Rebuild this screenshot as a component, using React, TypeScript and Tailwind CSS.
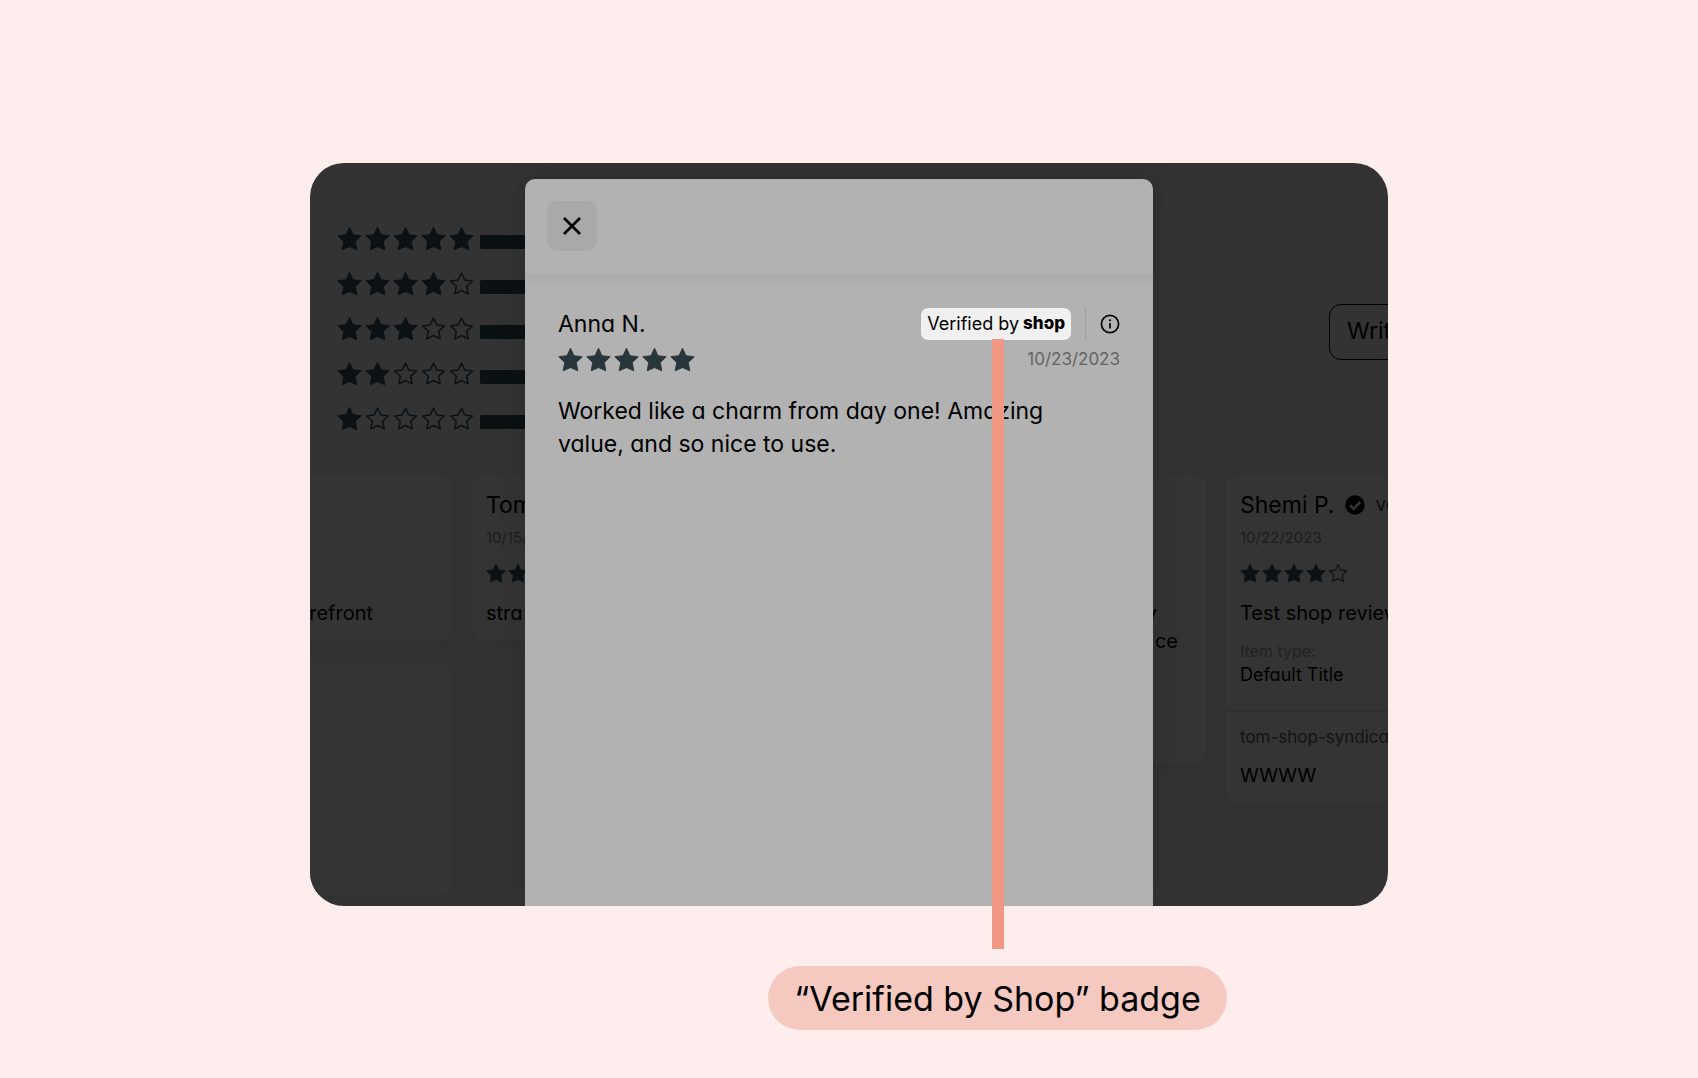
import React from "react";

const STAR =
  "M12.5 1.2 L16 8.7 L24.2 9.7 L18.3 15.5 L19.8 23.8 L12.5 20.6 L5.2 23.8 L6.7 15.5 L0.8 9.7 L9 8.7 Z";
const STAR_OUTLINE =
  "M12.5 2 L15.7 8.9 L23.4 9.9 L17.7 15.2 L19.2 22.9 L12.5 19.5 L5.8 22.9 L7.3 15.2 L1.6 9.9 L9.3 8.9 Z";

function Star({ filled, className }: { filled: boolean; className: string }) {
  return (
    <svg viewBox="0 0 25 25" className={className} aria-hidden="true">
      {filled ? (
        <path d={STAR} fill="currentColor" stroke="currentColor" strokeWidth="0.9" strokeLinejoin="round" />
      ) : (
        <path d={STAR_OUTLINE} fill="none" stroke="currentColor" strokeWidth="1.5" strokeLinejoin="round" />
      )}
    </svg>
  );
}

function Stars({ value, small = false }: { value: number; small?: boolean }) {
  return (
    <div
      role="img"
      aria-label={`${value} out of 5 stars`}
      className={small ? "flex gap-[2px]" : "flex gap-[3px]"}
    >
      {[1, 2, 3, 4, 5].map((n) => (
        <Star key={n} filled={n <= value} className={small ? "size-5" : "size-[25px]"} />
      ))}
    </div>
  );
}

function Card({ children, className = "" }: { children?: React.ReactNode; className?: string }) {
  return (
    <article className={`rounded-[10px] bg-[#343434] shadow-[0_4px_12px_rgba(0,0,0,0.06)] ${className}`}>
      {children}
    </article>
  );
}

function Storefront() {
  return (
    <div className="pt-[53px] pb-[11px] whitespace-nowrap text-black">
      <div className="flex items-center justify-between pl-[27px]">
        <ul className="text-[#0b1115]">
          {[5, 4, 3, 2, 1].map((n) => (
            <li key={n} className="flex h-[45px] items-center gap-[6px]">
              <Stars value={n} />
              <span className="mt-[6px] h-[14px] w-[100px] rounded-[2px] bg-[#0b1013]" />
            </li>
          ))}
        </ul>
        <button
          type="button"
          className="mt-[6px] -mr-[121px] h-14 w-[180px] shrink-0 rounded-xl border border-black px-[17px] text-left text-[23px]"
        >
          Write a review
        </button>
      </div>

      <div className="mt-[34px] -ml-[215px] flex items-start gap-5">
        <div className="flex w-[357px] shrink-0 flex-col gap-5">
          <Card className="h-[166px] pt-[124px] pr-[79px] text-right text-[20px] leading-[28px]">storefront</Card>
          <Card className="h-[234px]" />
        </div>

        <Card className="h-[166px] w-[357px] shrink-0 px-[14px] pt-[14px]">
          <h3 className="text-[23px] leading-[32px]">Tom</h3>
          <p className="mt-1 text-[15px] leading-[26px] text-[#1d1d1d]">10/15/2023</p>
          <div className="mt-3 text-[#0b1115]">
            <Stars value={5} small />
          </div>
          <p className="mt-4 text-[20px] leading-[28px]">stra</p>
        </Card>

        <Card className="h-[288px] w-[357px] shrink-0 pt-[124px] pr-[28px] text-right text-[20px] leading-[28px]">
          <p className="pr-[21px]">y</p>
          <p>ce</p>
        </Card>

        <Card className="w-[357px] shrink-0 pt-[14px]">
          <div className="px-[14px]">
            <h3 className="flex items-center text-[23px] leading-[32px]">
              Shemi P.
              <svg viewBox="0 0 20 20" className="mr-[11px] ml-[10px] size-5" aria-hidden="true">
                <circle cx="10" cy="10" r="9.7" fill="#000" />
                <path d="M5 10.2 L8.6 13.8 L15.2 7" fill="none" stroke="#353535" strokeWidth="2.6" />
              </svg>
              <span className="text-[19px] text-[#0c0c0c]">verified</span>
            </h3>
            <p className="mt-1 text-[15px] leading-[26px] text-[#1d1d1d]">10/22/2023</p>
            <div className="mt-3 text-[#0b1115]">
              <Stars value={4} small />
            </div>
            <p className="mt-4 text-[20px] leading-[28px]">Test shop review</p>
            <p className="mt-3 text-[16px] leading-6 text-[#222222]">Item type:</p>
            <p className="text-[18px] leading-6">Default Title</p>
          </div>
          <div className="mt-[23px] border-t-2 border-[#2f2f2f] px-[14px] pt-3 pb-[15px]">
            <p className="text-[17px] leading-[26px] text-[#131313]">tom-shop-syndication</p>
            <p className="mt-3 text-[19px] leading-[28px]">WWWW</p>
          </div>
        </Card>
      </div>
    </div>
  );
}

function ShopWordmark() {
  return (
    <b className="font-extrabold">
      sh
      <span className="relative">
        o
        <span className="absolute top-1/2 left-0 h-px w-1 bg-[#f0f0f0]" />
      </span>
      p
    </b>
  );
}

function ReviewDialog() {
  return (
    <section
      role="dialog"
      aria-label="Review by Anna N."
      className="absolute top-[16px] right-[235px] bottom-0 left-[215px] rounded-t-[10px] bg-[#b2b2b2] text-black shadow-[0_0_30px_rgba(0,0,0,0.12)]"
    >
      <header className="px-[22px] pt-[22px] pb-[23px] shadow-[0_4px_12px_rgba(0,0,0,0.06)]">
        <button
          type="button"
          aria-label="Close"
          className="flex size-[50px] items-center justify-center rounded-[10px] bg-[#a9a9a9]"
        >
          <svg viewBox="0 0 18 18" className="size-[18px]" aria-hidden="true">
            <path d="M1 1 L17 17 M17 1 L1 17" stroke="#000" strokeWidth="2.7" />
          </svg>
        </button>
      </header>

      <div className="px-[33px] pt-[33px]">
        <div className="flex items-center justify-between">
          <h2 className="text-[23px] leading-8">Anna N.</h2>
          <div className="flex items-center">
            <span className="flex h-8 items-center gap-1 rounded-[7px] bg-[#f0f0f0] px-[6px] text-[18px]">
              Verified by
              <span className="text-[17px]">
                <ShopWordmark />
              </span>
            </span>
            <span className="ml-[14px] h-[33px] w-px bg-[#a0a0a0]" />
            <button type="button" aria-label="About this badge" className="ml-[14px]">
              <svg viewBox="0 0 20 20" className="size-5" aria-hidden="true">
                <circle cx="10" cy="10" r="8.6" fill="none" stroke="#0a0a0a" strokeWidth="1.8" />
                <path d="M10 9 V14.4" stroke="#0a0a0a" strokeWidth="1.8" />
                <circle cx="10" cy="6.3" r="1.1" fill="#0a0a0a" />
              </svg>
            </button>
          </div>
        </div>
        <div className="mt-1 flex items-center justify-between text-[#28363c]">
          <Stars value={5} />
          <time className="text-[17px] leading-[30px] text-[#646464]">10/23/2023</time>
        </div>
        <p className="mt-[21px] text-[23px] leading-[33px]">
          Worked like a charm from day one! Amazing
          <br />
          value, and so nice to use.
        </p>
      </div>
    </section>
  );
}

export default function App() {
  return (
    <main className="min-h-screen bg-[#fdeeed] pt-[163px] font-['Inter',sans-serif]">
      <div className="relative mx-auto max-w-[1078px]">
        <div className="relative overflow-hidden rounded-[34px] bg-[#333333] [font-feature-settings:'cv11']">
          <Storefront />
          <ReviewDialog />
        </div>
        <div className="absolute top-[176px] -bottom-[43px] left-[682px] w-3 bg-[#f19885]" />
      </div>
      <div className="mx-auto mt-[60px] max-w-[1078px] pl-[458px]">
        <p className="flex h-16 w-[459px] items-center justify-center rounded-full bg-[#f6c9c0] text-[34px] whitespace-nowrap text-black">
          “Verified by Shop” badge
        </p>
      </div>
    </main>
  );
}
